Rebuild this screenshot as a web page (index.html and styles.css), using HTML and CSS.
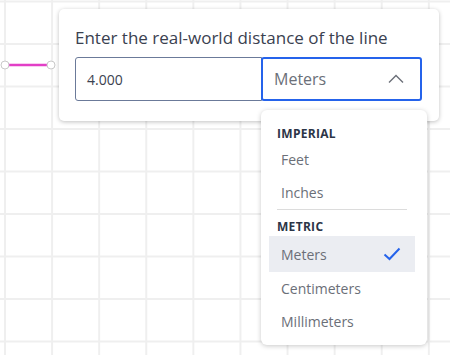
FILE: index.html
```html
<!DOCTYPE html>
<html>
<head>
<meta charset="utf-8">
<link rel="stylesheet" href="styles.css">
</head>
<body>
<div class="canvas">
  <svg class="segment" width="60" height="20" viewBox="0 0 60 20">
    <line x1="5" y1="10" x2="51" y2="10" stroke="#e23fc6" stroke-width="2.5"/>
    <circle cx="5" cy="10" r="4" fill="#fff" stroke="#c9c9c9" stroke-width="1"/>
    <circle cx="51" cy="10" r="4" fill="#fff" stroke="#c9c9c9" stroke-width="1"/>
  </svg>

  <div class="popup">
    <div class="title">Enter the real-world distance of the line</div>
    <div class="fields">
      <div class="input">4.000</div>
      <div class="select">
        <span>Meters</span>
        <svg class="chev" width="16" height="10" viewBox="0 0 16 10">
          <path d="M1 8.5 L8 1.5 L15 8.5" fill="none" stroke="#6b6f78" stroke-width="1.4"/>
        </svg>
      </div>
    </div>
  </div>

  <div class="menu">
    <div class="group">IMPERIAL</div>
    <div class="item">Feet</div>
    <div class="item">Inches</div>
    <div class="divider"></div>
    <div class="group">METRIC</div>
    <div class="item active">
      <span>Meters</span>
      <svg width="18" height="14" viewBox="0 0 18 14">
        <path d="M1.5 7.5 L6.5 12 L16.5 1.5" fill="none" stroke="#2563eb" stroke-width="2"/>
      </svg>
    </div>
    <div class="item">Centimeters</div>
    <div class="item">Millimeters</div>
  </div>
</div>
</body>
</html>
```

FILE: styles.css
```css
* { box-sizing: border-box; }
html, body { margin: 0; padding: 0; }
body {
  width: 450px;
  height: 355px;
  overflow: hidden;
  font-family: "Open Sans", "Noto Sans", sans-serif;
  background: #fff;
}
.canvas {
  position: relative;
  width: 450px;
  height: 355px;
  background-color: #fff;
  background-image:
    linear-gradient(to right, #efefef 0, #efefef 1.5px, transparent 1.5px),
    linear-gradient(to bottom, #efefef 0, #efefef 1.5px, transparent 1.5px);
  background-size: 47.1px 42.5px, 47.1px 42.5px;
  background-position: 4px 0, 0 0.5px;
}
.segment {
  position: absolute;
  left: 0;
  top: 55px;
}
.popup {
  position: absolute;
  left: 59px;
  top: 9px;
  width: 380px;
  height: 112px;
  background: #fff;
  border-radius: 5px;
  box-shadow: 0 1px 4px rgba(0,0,0,0.25);
  padding: 17px 16px 0 16px;
}
.title {
  font-size: 17px;
  font-weight: 500;
  color: #3a4150;
  line-height: 23px;
}
.fields {
  display: flex;
  margin-top: 8px;
}
.input {
  width: 187px;
  height: 44px;
  border: 1px solid #6b7a99;
  border-radius: 3px 0 0 3px;
  padding: 0 11px;
  display: flex;
  align-items: center;
  font-size: 14px;
  color: #3b4250;
}
.select {
  width: 161px;
  height: 44px;
  margin-left: -1px;
  border: 2px solid #2563eb;
  border-radius: 3px;
  padding: 0 10px 0 11px;
  display: flex;
  align-items: center;
  justify-content: space-between;
  font-size: 16px;
  color: #6b6f78;
}
.chev { margin-right: 6px; margin-top: -1px; }
.menu {
  position: absolute;
  left: 261px;
  top: 110px;
  width: 166px;
  height: 235px;
  background: #fff;
  border-radius: 6px;
  box-shadow: 0 1px 5px rgba(0,0,0,0.22);
  padding: 15px 12px 0 8px;
}
.group {
  font-size: 12px;
  font-weight: 700;
  color: #2c3547;
  letter-spacing: 0.3px;
  padding-left: 8px;
  height: 18px;
  line-height: 18px;
}
.item {
  height: 33px;
  padding: 0 14px 0 12px;
  display: flex;
  align-items: center;
  justify-content: space-between;
  font-size: 14px;
  color: #6b6f78;
}
.active {
  background: #ebedf2;
  height: 36px;
}
.divider {
  height: 1px;
  background: #dcdcdc;
  margin: 0 8px 8px 8px;
}
```
